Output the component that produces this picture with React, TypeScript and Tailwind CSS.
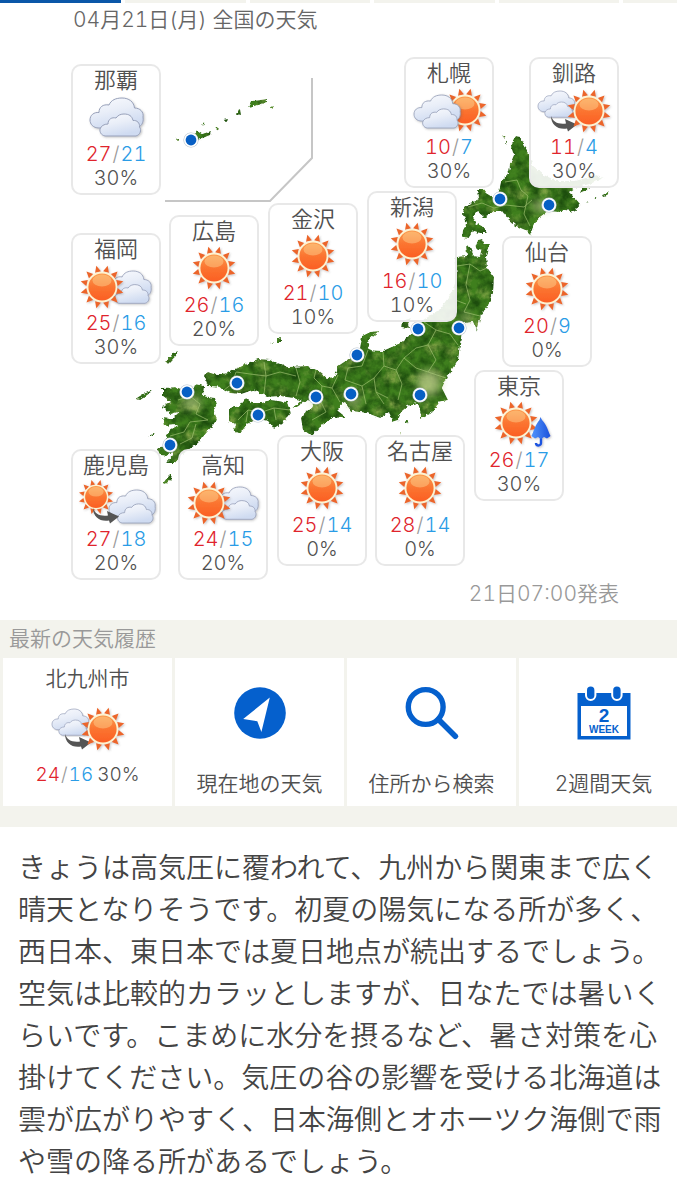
import type { ReactNode } from "react";

type IconType =
  | "sunny"
  | "cloudy"
  | "cloudySunny"
  | "cloudyThenSunny"
  | "sunnyCloudy"
  | "sunnyThenCloudy"
  | "sunnyRain";

type City = {
  name: string;
  icon: IconType;
  high: number;
  low: number;
  rain: number;
  x: number;
  y: number;
};

// map drawing size, cities and pins are placed in these units
const MAP_WIDTH = 677;
const MAP_HEIGHT = 545;

const cities: City[] = [
  { name: "那覇", icon: "cloudy", high: 27, low: 21, rain: 30, x: 71, y: 27 },
  { name: "札幌", icon: "cloudySunny", high: 10, low: 7, rain: 30, x: 404, y: 20 },
  { name: "釧路", icon: "cloudyThenSunny", high: 11, low: 4, rain: 30, x: 529, y: 20 },
  { name: "新潟", icon: "sunny", high: 16, low: 10, rain: 10, x: 367, y: 154 },
  { name: "金沢", icon: "sunny", high: 21, low: 10, rain: 10, x: 268, y: 166 },
  { name: "広島", icon: "sunny", high: 26, low: 16, rain: 20, x: 169, y: 178 },
  { name: "福岡", icon: "sunnyCloudy", high: 25, low: 16, rain: 30, x: 71, y: 196 },
  { name: "仙台", icon: "sunny", high: 20, low: 9, rain: 0, x: 502, y: 199 },
  { name: "東京", icon: "sunnyRain", high: 26, low: 17, rain: 30, x: 474, y: 333 },
  { name: "大阪", icon: "sunny", high: 25, low: 14, rain: 0, x: 277, y: 398 },
  { name: "名古屋", icon: "sunny", high: 28, low: 14, rain: 0, x: 375, y: 398 },
  { name: "鹿児島", icon: "sunnyThenCloudy", high: 27, low: 18, rain: 20, x: 71, y: 412 },
  { name: "高知", icon: "sunnyCloudy", high: 24, low: 15, rain: 20, x: 178, y: 412 },
];

const pins = [
  [191, 140], [500, 199], [549, 205], [418, 329], [459, 328], [357, 355], [351, 394],
  [420, 395], [187, 392], [237, 383], [316, 397], [258, 415], [170, 445],
];

const rays = [15, 45, 75, 105, 135, 165, 195, 225, 255, 285, 315, 345];

function Sun({ x, y, scale = 1 }: { x: number; y: number; scale?: number }) {
  return (
    <g transform={`translate(${x} ${y}) scale(${scale})`} filter="url(#shadow)">
      {rays.map((angle) => (
        <path key={angle} d="M-3 -15.500 L0 -22 L3 -15.500 Z" fill="#ec6529" transform={`rotate(${angle})`} />
      ))}
      <circle r="15.2" fill="#fff3cf" />
      <circle r="13.6" fill="url(#sunFill)" />
      <ellipse cy="-6.5" rx="9.5" ry="6" fill="#ffe0a0" opacity="0.4" />
    </g>
  );
}

function Cloud({ x, y, scale = 1 }: { x: number; y: number; scale?: number }) {
  return (
    <g
      transform={`translate(${x} ${y}) scale(${scale})`}
      filter="url(#shadow)"
      fill="url(#cloudFill)"
      stroke="#98a1ba"
      strokeWidth="1"
    >
      <path d="M9 30 C3 30 0 26 0 22 C0 17 4 14 9 14.500 C9 9 13 6 19 7 C21 2 26 0 32 0 C39 0 44 4 44.500 10 C50 10 54 14 53 19 C54 25 51 29 46 30 Z" />
      <path d="M15 38 C11 37 9.500 34 10 31 C11 28 14 26 18 26 C18 21 22 19 26 20 C28 17 31 16 34 16 C39 16 42 18 43 22.500 C47 22 50 25 49.500 29 C52 32 50 37 46 38 Z" />
    </g>
  );
}

function ThenArrow() {
  return (
    <path
      d="M17 29 C19 35 24 37.500 32 36.500 L31 32 L43 37.500 L34 44.500 L33 41.500 C24 43 17 38 17 29 Z"
      fill="#555"
    />
  );
}

function Umbrella() {
  return (
    <g filter="url(#shadow)">
      <path d="M62 36 V43 A2.500 2.500 0 0 1 57 43" fill="none" stroke="#1f55e0" strokeWidth="2.400" />
      <path d="M61.500 17 L63 20 C68 25 69 31 71.500 36 L68 38.500 L65 37 L62 39 L59 37 L56 38.500 L52.500 36 C55 31 56 25 60.500 20 Z" fill="url(#umbrellaFill)" />
    </g>
  );
}

const iconParts: Record<IconType, ReactNode> = {
  sunny: <Sun x={40} y={23} />,
  cloudy: <Cloud x={14} y={4} />,
  cloudySunny: (
    <>
      <Sun x={56} y={23} />
      <Cloud x={5} y={8} scale={0.87} />
    </>
  ),
  cloudyThenSunny: (
    <>
      <Cloud x={4} y={4} scale={0.69} />
      <ThenArrow />
      <Sun x={55} y={24} />
    </>
  ),
  sunnyCloudy: (
    <>
      <Cloud x={30} y={8} scale={0.85} />
      <Sun x={26} y={24} />
    </>
  ),
  sunnyThenCloudy: (
    <>
      <Sun x={20} y={18} scale={0.8} />
      <Cloud x={33} y={11} scale={0.87} />
      <ThenArrow />
    </>
  ),
  sunnyRain: (
    <>
      <Sun x={37} y={23} />
      <Umbrella />
    </>
  ),
};

function WeatherIcon({ type }: { type: IconType }) {
  return (
    <svg className="h-12 w-20 shrink-0 overflow-visible" viewBox="0 0 80 48" aria-hidden="true">
      {iconParts[type]}
    </svg>
  );
}

function Temps({ high, low }: { high: number; low: number }) {
  return (
    <>
      <span className="text-[#e0242c]">{high}</span>
      <span className="mx-px text-[#999]">/</span>
      <span className="text-[#2a9ce6]">{low}</span>
    </>
  );
}

function CityCard({ city }: { city: City }) {
  return (
    <a
      href="#"
      className="absolute flex w-[90px] flex-col items-center rounded-[10px] border-2 border-[#e8e8e8] bg-white/90 pb-[3px]"
      style={{ left: `${(city.x / MAP_WIDTH) * 100}%`, top: `${(city.y / MAP_HEIGHT) * 100}%` }}
    >
      <span className="text-[22px] leading-[28px]">{city.name}</span>
      <WeatherIcon type={city.icon} />
      <span className="flex h-6 items-center text-[20px] leading-6">
        <Temps high={city.high} low={city.low} />
      </span>
      <span className="text-[20px] leading-6">{city.rain}%</span>
    </a>
  );
}

function SharedDefs() {
  return (
    <svg className="absolute size-0" aria-hidden="true">
      <defs>
        <linearGradient id="sunFill" x1="0" y1="0" x2="0" y2="1">
          <stop offset="0" stopColor="#fb9a4e" />
          <stop offset="0.5" stopColor="#fb7430" />
          <stop offset="1" stopColor="#fb5f24" />
        </linearGradient>
        <linearGradient id="cloudFill" x1="0" y1="0" x2="0.4" y2="1">
          <stop offset="0" stopColor="#fafbfe" />
          <stop offset="0.5" stopColor="#e9eef8" />
          <stop offset="1" stopColor="#cfdbf1" />
        </linearGradient>
        <linearGradient id="umbrellaFill" x1="0" y1="0" x2="1" y2="0">
          <stop offset="0" stopColor="#4f93fb" />
          <stop offset="1" stopColor="#1c51dc" />
        </linearGradient>
        <filter id="shadow" x="-20%" y="-20%" width="150%" height="150%">
          <feDropShadow dx="1" dy="1" stdDeviation="1" floodColor="#555" floodOpacity="0.35" />
        </filter>
        {/* mottled forest colours with a ragged coast */}
        <filter id="land" x="0" y="0" width="100%" height="100%" colorInterpolationFilters="sRGB">
          <feTurbulence type="fractalNoise" baseFrequency="0.3" numOctaves="2" seed="4" result="coast" />
          <feDisplacementMap in="SourceGraphic" in2="coast" scale="4" xChannelSelector="R" yChannelSelector="G" result="shape" />
          <feTurbulence type="fractalNoise" baseFrequency="0.07" numOctaves="5" seed="11" />
          <feColorMatrix type="matrix" values="0 0 0 0 0  0 0 0 0 0  0 0 0 0 0  2.6 0 0 0 -1.3" result="patches" />
          <feFlood floodColor="#8aa84c" />
          <feComposite in2="patches" operator="in" result="light" />
          <feTurbulence type="fractalNoise" baseFrequency="0.1" numOctaves="4" seed="21" />
          <feColorMatrix type="matrix" values="0 0 0 0 0.11  0 0 0 0 0.3  0 0 0 0 0.05  0 2 0 0 -0.65" result="dark" />
          <feMerge result="tone">
            <feMergeNode in="shape" />
            <feMergeNode in="light" />
            <feMergeNode in="dark" />
          </feMerge>
          <feComposite in="tone" in2="shape" operator="in" />
        </filter>
        <filter id="soft" x="-50%" y="-50%" width="200%" height="200%">
          <feGaussianBlur stdDeviation="4" />
        </filter>
      </defs>
    </svg>
  );
}

function JapanMap() {
  return (
    <svg className="size-full" viewBox="0 37 677 545" role="img" aria-label="日本地図">
      <path d="M312 78 V158 L270 201 H165" fill="none" stroke="#c6c6c6" strokeWidth="2" />
      <g filter="url(#land)">
        <g fill="#3f7f1d">
          {/* Hokkaido */}
          <path d="M516 136 L520 137 L525 145 L529 156 L533 166 L544 175 L557 181 L575 181 L597 175 L604 178 L590 184 L577 187 L569 192 L576 199 L580 204 L574 212 L566 210 L558 212 L548 211 L540 217 L534 225 L530 235 L525 230 L516 226 L508 219 L502 211 L494 211 L485 218 L477 211 L473 216 L476 223 L482 226 L487 233 L480 233 L473 231 L468 239 L462 238 L463 230 L467 223 L463 214 L464 208 L470 203 L479 199 L478 189 L483 189 L486 193 L494 198 L499 191 L501 182 L509 172 L510 164 L514 155 L511 147 L513 140 Z" />
          <path d="M580 193 L582 188 L590 185 L588 190 Z M602 195 L609 192 L607 196 L603 197 Z M502 135 L506 137 L504 139 Z M505 140 L507 143 L505 144 Z" />
          <path d="M586 203 L588 201 L589 202 Z M594 199 L597 197 L596 199 Z" />
          {/* Honshu */}
          <path d="M466 246 L470 247 L474 256 L481 257 L482 250 L475 248 L478 240 L482 239 L485 244 L490 244 L486 255 L487 267 L494 277 L493 293 L488 306 L481 315 L477 331 L473 322 L464 323 L461 338 L458 360 L447 377 L442 388 L448 400 L439 402 L433 412 L421 418 L420 410 L418 403 L408 406 L402 411 L398 420 L392 422 L389 412 L380 418 L367 413 L351 411 L346 404 L342 402 L338 411 L346 417 L333 418 L323 424 L312 436 L303 430 L301 418 L305 411 L312 409 L314 402 L303 401 L293 398 L280 396 L267 397 L253 390 L241 394 L230 393 L220 387 L208 386 L204 375 L208 372 L217 375 L227 373 L240 367 L250 362 L258 359 L271 360 L287 367 L307 366 L317 370 L327 378 L335 377 L338 366 L350 358 L360 348 L362 336 L370 332 L379 331 L367 341 L370 350 L383 351 L400 343 L415 331 L423 320 L440 309 L452 292 L457 277 L455 257 L467 256 Z" />
          {/* Sado */}
          <path d="M402 321 L411 318 L408 324 L409 329 L401 328 Z" />
          {/* Awaji */}
          <path d="M292 408 L303 399 L300 405 L294 409 Z" />
          {/* Shikoku */}
          <path d="M229 408 L240 406 L246 398 L252 403 L262 403 L270 400 L287 402 L291 413 L284 422 L274 429 L268 421 L258 419 L247 424 L240 434 L233 431 L236 425 L229 421 Z" />
          {/* Kyushu */}
          <path d="M163 388 L176 387 L186 391 L197 384 L204 386 L203 396 L215 398 L217 404 L214 410 L217 420 L208 431 L198 443 L188 450 L181 456 L175 463 L166 463 L173 455 L172 450 L167 456 L160 455 L157 448 L166 446 L166 437 L170 430 L178 425 L165 426 L163 418 L172 419 L179 412 L170 414 L162 406 L171 402 L163 396 Z" />
          <path d="M166 362 L173 353 L178 351 L176 356 L168 364 Z" />
          <path d="M135 399 L143 394 L153 390 L145 397 L140 400 Z M148 436 L155 433 L153 436 Z" />
          <path d="M163 483 L167 478 L172 473 L171 479 L166 484 Z" />
          <path d="M277 339 L281 338 L281 342 L277 342 Z M271 343 L274 342 L273 344 Z" />
          {/* Izu islands */}
          <path d="M405 420 L408 420 L407 424 Z M400 433 L402 432 L401 435 Z" />
          {/* Okinawa */}
          <path d="M186 146 L197 131 L202 134 L211 131 L210 135 L203 138 L198 140 Z" />
          <path d="M249 107 L252 101 L260 100 L267 99 L267 102 L259 105 Z M237 114 L240 108 L241 115 Z M223 120 L228 119 L227 122 Z M270 107 L274 106 L273 109 Z" />
          <path d="M201 126 L204 123 L205 125 Z M215 128 L218 127 L217 130 Z M175 139 L179 138 L179 141 Z" />
        </g>
      </g>
      {/* plains */}
      <g fill="#c3cf8e" filter="url(#soft)" opacity="0.75">
        <ellipse cx="429" cy="383" rx="12" ry="13" />
        <ellipse cx="354" cy="401" rx="7" ry="5" />
        <ellipse cx="541" cy="206" rx="10" ry="5" />
        <ellipse cx="192" cy="403" rx="9" ry="6" />
        <ellipse cx="316" cy="403" rx="4" ry="4" />
        <ellipse cx="466" cy="318" rx="4" ry="6" />
      </g>
      {/* prefecture borders */}
      <g fill="none" stroke="#a8c878" strokeWidth="0.8" opacity="0.8" strokeLinejoin="round">
        <path d="M468 207 L482 203 L494 208 L506 205 L524 207 L532 200 M505 182 L517 180 L521 190 L528 196 L524 214 L530 226" />
        <path d="M457 266 L470 264 L480 271 L487 268 M470 264 L466 285 L470 300 L464 312 L480 316 M455 300 L466 304" />
        <path d="M424 322 L436 330 L450 334 L458 345 M436 330 L428 345 L416 348 L404 358 L396 370 L402 384 L398 400 M428 345 L436 360 L428 372 L446 378 M404 358 L416 368 L428 372" />
        <path d="M383 352 L384 366 L374 378 L376 392 L384 404 M374 378 L362 386 L366 404 M384 366 L396 370 M368 350 L362 366 L348 368 L345 380 L362 386 M376 392 L388 398" />
        <path d="M338 375 L332 388 L340 402 M332 388 L322 386 L314 378 L316 370 M322 386 L320 400 L326 412 L312 420" />
        <path d="M296 368 L300 382 L296 396 M264 362 L266 376 L264 394 M266 376 L280 372 L296 376 M266 376 L250 374 L236 372 L232 384 L224 390" />
        <path d="M238 420 L248 410 L262 412 L274 408 L290 410 M248 410 L246 422 M274 408 L276 420" />
        <path d="M178 400 L190 396 L200 404 L196 414 L208 420 L190 422 L184 432 L170 436 M196 424 L192 438 L180 444" />
      </g>
      {pins.map(([x, y]) => (
        <g key={`${x}-${y}`}>
          <circle cx={x} cy={y} r="7.6" fill="#b9c4cf" />
          <circle cx={x} cy={y} r="7" fill="#fff" />
          <circle cx={x} cy={y} r="5.4" fill="#075fc4" />
        </g>
      ))}
    </svg>
  );
}

function LocationIcon() {
  return (
    <svg className="size-[54px]" viewBox="0 0 54 54" aria-hidden="true">
      <circle cx="27" cy="27" r="25.8" fill="#0560cd" />
      <path d="M36.800 11.500 L10.200 33 L24.300 35.300 L28.400 46 Z" fill="#fff" />
    </svg>
  );
}

function SearchIcon() {
  return (
    <svg className="size-[54px]" viewBox="0 0 54 54" fill="none" stroke="#0560cd" aria-hidden="true">
      <circle cx="20.700" cy="21" r="17.400" strokeWidth="5.400" />
      <path d="M33.500 33.500 L50.300 50.300" strokeWidth="5.600" strokeLinecap="round" />
    </svg>
  );
}

function TwoWeekIcon() {
  return (
    <svg className="size-[54px] overflow-visible" viewBox="0 0 54 54" aria-hidden="true">
      <path d="M0.500 7 H53.500 V53.500 H0.500 Z" fill="#0560cd" />
      <path d="M4 20 H50 V50 H4 Z" fill="#fff" />
      <rect x="9" y="-0.500" width="9.400" height="14.500" rx="4.700" fill="#0560cd" stroke="#fff" strokeWidth="2" />
      <rect x="35.200" y="-0.500" width="9.400" height="14.500" rx="4.700" fill="#0560cd" stroke="#fff" strokeWidth="2" />
      <g fill="#0560cd" textAnchor="middle" fontFamily="Liberation Sans, sans-serif" fontWeight="700">
        <text x="27" y="36" fontSize="19">2</text>
        <text x="27" y="47" fontSize="10">WEEK</text>
      </g>
    </svg>
  );
}

function MenuTile({ icon, label }: { icon: ReactNode; label: string }) {
  return (
    <a href="#" className="flex h-[148px] w-[169px] shrink-0 flex-col items-center bg-white pt-7">
      {icon}
      <span className="mt-[30px] text-[21px] leading-[28px]">{label}</span>
    </a>
  );
}

export default function App() {
  return (
    <div className="min-h-screen overflow-x-hidden bg-white font-['Inter','Noto_Sans_CJK_JP',sans-serif] font-[350] text-[#505050] tabular-nums">
      <SharedDefs />
      {/* Tab underline */}
      <div className="flex h-[3px] gap-1 overflow-hidden">
        <div className="w-[121px] shrink-0 bg-[#0a57a8]" />
        <div className="w-[121px] shrink-0 bg-[#f3f3ed]" />
        <div className="w-[120px] shrink-0 bg-[#f3f3ed]" />
        <div className="w-[121px] shrink-0 bg-[#f3f3ed]" />
        <div className="w-[120px] shrink-0 bg-[#f3f3ed]" />
        <div className="flex-1 bg-[#f3f3ed]" />
      </div>

      <main>
        {/* Map */}
        <section>
          <h1 className="pl-[73px] text-[21px] leading-[34px] text-[#666]">04月21日(月) 全国の天気</h1>
          <div className="relative aspect-[677/545] w-full">
            <JapanMap />
            {cities.map((city) => (
              <CityCard key={city.name} city={city} />
            ))}
          </div>
          <p className="pr-[58px] pb-[14px] text-right text-[21px] leading-6 text-[#999]">21日07:00発表</p>
        </section>

        {/* History */}
        <section className="bg-[#f3f3ed] pb-[21px]">
          <h2 className="pl-[9px] text-[21px] leading-[38px] text-[#999]">最新の天気履歴</h2>
          <div className="flex gap-[3px] overflow-hidden pl-[3px]">
            <a href="#" className="flex h-[148px] w-[169px] shrink-0 flex-col items-center bg-white pt-[7px]">
              <span className="mb-3 text-[21px] leading-[28px]">北九州市</span>
              <WeatherIcon type="cloudyThenSunny" />
              <span className="mt-2 flex h-7 items-center text-[19px]">
                <Temps high={24} low={16} />
                <span className="ml-1">30%</span>
              </span>
            </a>
            <MenuTile icon={<LocationIcon />} label="現在地の天気" />
            <MenuTile icon={<SearchIcon />} label="住所から検索" />
            <MenuTile icon={<TwoWeekIcon />} label="2週間天気" />
          </div>
        </section>

        {/* Overview */}
        <p className="pt-5 pr-3 pb-4 pl-[18px] text-[28px] leading-[42px] text-[#444]">
          きょうは高気圧に覆われて、九州から関東まで広く晴天となりそうです。初夏の陽気になる所が多く、西日本、東日本では夏日地点が続出するでしょう。空気は比較的カラッとしますが、日なたでは暑いくらいです。こまめに水分を摂るなど、暑さ対策を心掛けてください。気圧の谷の影響を受ける北海道は雲が広がりやすく、日本海側とオホーツク海側で雨や雪の降る所があるでしょう。
        </p>
      </main>
    </div>
  );
}
